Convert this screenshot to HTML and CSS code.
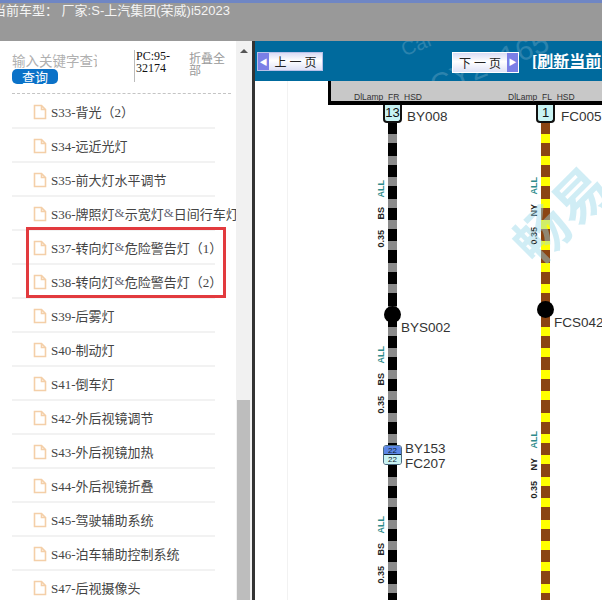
FILE: index.html
```html
<!DOCTYPE html>
<html lang="zh">
<head>
  <meta charset="UTF-8">
  <title>电路图</title>
  <link rel="stylesheet" href="styles.css">
</head>
<body>
  <div class="topbar">
    <div class="car-title">当前车型： 厂家:S-上汽集团(荣威)i52023</div>
  </div>
  <div class="main">
    <div class="sidebar">
      <div class="search">
        <div class="search-box">
          <div class="keyword">输入关键字查询</div>
          <button class="btn-query">查询</button>
        </div>
        <div class="pc-code">PC:95-32174</div>
        <div class="fold">折叠全部</div>
      </div>
      <ul class="tree">
        <li><svg class="file" viewBox="0 0 14 16"><path d="M1.5 1.5h7l4 4v9h-11z M8.5 1.5v4h4"/></svg>S33-背光（2）</li>
        <li><svg class="file" viewBox="0 0 14 16"><path d="M1.5 1.5h7l4 4v9h-11z M8.5 1.5v4h4"/></svg>S34-远近光灯</li>
        <li><svg class="file" viewBox="0 0 14 16"><path d="M1.5 1.5h7l4 4v9h-11z M8.5 1.5v4h4"/></svg>S35-前大灯水平调节</li>
        <li><svg class="file" viewBox="0 0 14 16"><path d="M1.5 1.5h7l4 4v9h-11z M8.5 1.5v4h4"/></svg>S36-牌照灯<span class="amp">&amp;</span>示宽灯<span class="amp">&amp;</span>日间行车灯</li>
        <li><svg class="file" viewBox="0 0 14 16"><path d="M1.5 1.5h7l4 4v9h-11z M8.5 1.5v4h4"/></svg>S37-转向灯<span class="amp">&amp;</span>危险警告灯（1）</li>
        <li><svg class="file" viewBox="0 0 14 16"><path d="M1.5 1.5h7l4 4v9h-11z M8.5 1.5v4h4"/></svg>S38-转向灯<span class="amp">&amp;</span>危险警告灯（2）</li>
        <li><svg class="file" viewBox="0 0 14 16"><path d="M1.5 1.5h7l4 4v9h-11z M8.5 1.5v4h4"/></svg>S39-后雾灯</li>
        <li><svg class="file" viewBox="0 0 14 16"><path d="M1.5 1.5h7l4 4v9h-11z M8.5 1.5v4h4"/></svg>S40-制动灯</li>
        <li><svg class="file" viewBox="0 0 14 16"><path d="M1.5 1.5h7l4 4v9h-11z M8.5 1.5v4h4"/></svg>S41-倒车灯</li>
        <li><svg class="file" viewBox="0 0 14 16"><path d="M1.5 1.5h7l4 4v9h-11z M8.5 1.5v4h4"/></svg>S42-外后视镜调节</li>
        <li><svg class="file" viewBox="0 0 14 16"><path d="M1.5 1.5h7l4 4v9h-11z M8.5 1.5v4h4"/></svg>S43-外后视镜加热</li>
        <li><svg class="file" viewBox="0 0 14 16"><path d="M1.5 1.5h7l4 4v9h-11z M8.5 1.5v4h4"/></svg>S44-外后视镜折叠</li>
        <li><svg class="file" viewBox="0 0 14 16"><path d="M1.5 1.5h7l4 4v9h-11z M8.5 1.5v4h4"/></svg>S45-驾驶辅助系统</li>
        <li><svg class="file" viewBox="0 0 14 16"><path d="M1.5 1.5h7l4 4v9h-11z M8.5 1.5v4h4"/></svg>S46-泊车辅助控制系统</li>
        <li><svg class="file" viewBox="0 0 14 16"><path d="M1.5 1.5h7l4 4v9h-11z M8.5 1.5v4h4"/></svg>S47-后视摄像头</li>
      </ul>
      <div class="red-box"></div>
    </div>
    <div class="scrollbar">
      <div class="scroll-up"></div>
      <div class="scroll-thumb"></div>
    </div>
    <div class="content">
      <div class="toolbar">
        <span class="wm-toolbar wm-a">Car</span>
        <span class="wm-toolbar wm-b">CY20165</span>
        <div class="page-btn btn-prev"><span class="arrow">◀</span><span class="page-label">上 一 页</span></div>
        <div class="page-btn btn-next"><span class="page-label">下 一 页</span><span class="arrow">▶</span></div>
        <a class="refresh">[刷新当前</a>
      </div>
      <div class="diagram">
        <div class="fuse-box">
          <span class="pin-name pin-r">DlLamp&nbsp; FR&nbsp; HSD</span>
          <span class="pin-name pin-l">DlLamp&nbsp; FL&nbsp; HSD</span>
        </div>

        <div class="wire wire-bs"></div>
        <div class="wire wire-ny"></div>

        <div class="plug plug-r">13</div>
        <div class="code code-by008">BY008</div>
        <div class="plug plug-l">1</div>
        <div class="code code-fc005">FC005</div>

        <div class="wire-tag tag-b1"><span>0.35</span><span>BS</span><span class="tag-all">ALL</span></div>
        <div class="wire-tag tag-b2"><span>0.35</span><span>BS</span><span class="tag-all">ALL</span></div>
        <div class="wire-tag tag-b3"><span>0.35</span><span>BS</span><span class="tag-all">ALL</span></div>
        <div class="wire-tag tag-n1"><span>0.35</span><span>NY</span><span class="tag-all">ALL</span></div>
        <div class="wire-tag tag-n2"><span>0.35</span><span>NY</span><span class="tag-all">ALL</span></div>

        <div class="node node-bys"></div>
        <div class="code code-bys">BYS002</div>
        <div class="node node-fcs"></div>
        <div class="code code-fcs">FCS042</div>

        <div class="inline-plug">
          <div class="inline-top">22</div>
          <div class="inline-bottom">22</div>
        </div>
        <div class="code code-by153">BY153</div>
        <div class="code code-fc207">FC207</div>

        <div class="wm-logo">畅易</div>
      </div>
    </div>
  </div>
</body>
</html>
```

FILE: styles.css
```css
* {
  box-sizing: border-box;
}

html, body {
  height: 600px;
  margin: 0;
  overflow: hidden;
}

body {
  font-family: "Liberation Sans", "Noto Sans CJK SC", sans-serif;
  background-color: #fff;
}

.topbar {
  height: 41px;
  background-color: #999;
  border-top: 3px solid #6f86c4;
  overflow: hidden;
}

.car-title {
  margin: 0 0 0 -7px;
  font-size: 13px;
  line-height: 15px;
  color: #f4f4f4;
  white-space: nowrap;
}

.main {
  display: flex;
  height: 559px;
}

/* left tree */
.sidebar {
  position: relative;
  width: 236px;
  background-color: #fff;
  font-family: "Liberation Serif", "Noto Sans CJK SC", serif;
  overflow: hidden;
}

.search {
  display: flex;
  height: 53px;
  margin: 0 5px 0 12px;
  padding-top: 9px;
  border-bottom: 1px dashed #c4c4c4;
}

.search-box {
  width: 122px;
}

.keyword {
  width: 85px;
  height: 18px;
  margin-top: 1px;
  font-family: "Noto Sans CJK SC", sans-serif;
  font-size: 13.5px;
  line-height: 18px;
  color: #b0b0b0;
  white-space: nowrap;
  overflow: hidden;
}

.btn-query {
  display: block;
  width: 46px;
  height: 15px;
  padding: 0;
  border: none;
  border-radius: 5px;
  background-color: #0b72c8;
  color: #fff;
  font-family: "Noto Sans CJK SC", sans-serif;
  font-size: 13px;
  line-height: 15px;
}

.pc-code {
  width: 55px;
  height: 32px;
  padding-left: 1px;
  border-left: 1px solid #bbb;
  font-size: 12px;
  line-height: 12px;
  color: #111;
}

.fold {
  width: 42px;
  font-family: "Noto Sans CJK SC", sans-serif;
  font-size: 12px;
  line-height: 12px;
  color: #999;
  word-break: break-all;
  margin-top: 2px;
}

.tree {
  list-style: none;
  margin: 1px 0 0 12px;
  padding: 0;
  width: 203px;
}

.tree li {
  display: flex;
  align-items: center;
  height: 34px;
  padding-left: 21px;
  border-bottom: 2px solid #f2f2f2;
  font-size: 13px;
  color: #444;
  white-space: nowrap;
}

.amp {
  width: 12px;
  text-align: center;
  color: #667;
}

.file {
  flex: none;
  width: 14px;
  height: 16px;
  margin: 2px 4px 0 0;
  fill: none;
  stroke: #f4cfa8;
  stroke-width: 1.6;
}

.red-box {
  position: absolute;
  left: 26px;
  top: 186px;
  width: 200px;
  height: 71px;
  border: 3px solid #e23a3e;
}

.scrollbar {
  position: relative;
  width: 16px;
  background-color: #f1f1f1;
}

.scroll-up {
  position: absolute;
  left: 4px;
  top: 8px;
  border-left: 4px solid transparent;
  border-right: 4px solid transparent;
  border-bottom: 4px solid #555;
}

.scroll-thumb {
  position: absolute;
  left: 1px;
  top: 359px;
  width: 13px;
  height: 200px;
  background-color: #bdbdbd;
}

/* right panel */
.content {
  flex: 1;
  border-left: 3px solid #333;
  min-width: 0;
}

.toolbar {
  position: relative;
  height: 40px;
  background-color: #006a9d;
  overflow: hidden;
}

.wm-toolbar {
  position: absolute;
  color: #2c83ad;
  transform: rotate(-22deg);
  white-space: nowrap;
}

.wm-a {
  left: 146px;
  top: -8px;
  font-size: 20px;
}

.wm-b {
  left: 172px;
  top: 6px;
  font-size: 30px;
}

.page-btn {
  position: absolute;
  top: 11px;
  display: flex;
  align-items: center;
  height: 19px;
  font-family: "Liberation Serif", "Noto Sans CJK SC", serif;
  background: linear-gradient(#d9dcf5, #fff 45%, #dfe2f6);
  border: 1px solid #b9c0e8;
  font-size: 12px;
  color: #222;
}

.btn-prev {
  left: 2px;
  width: 66px;
}

.btn-next {
  left: 197px;
  width: 67px;
  top: 11px;
  height: 21px;
  border-color: #fff;
}

.page-label {
  flex: 1;
  text-align: center;
}

.arrow {
  flex: none;
  width: 11px;
  height: 100%;
  background-color: #7b7fe6;
  color: #fff;
  font-size: 8px;
  line-height: 19px;
  text-align: center;
}

.refresh {
  position: absolute;
  left: 277px;
  top: 11px;
  font-family: "Liberation Serif", "Noto Sans CJK SC", serif;
  font-size: 16px;
  line-height: 20px;
  font-weight: bold;
  color: #fff;
  text-decoration: underline;
  white-space: nowrap;
}

/* wiring diagram */
.diagram {
  position: relative;
  height: 519px;
  overflow: hidden;
  background: linear-gradient(90deg, #fff 32px, #f2f2f2 32px, #f2f2f2 33px, #fff 33px);
}

.fuse-box {
  position: absolute;
  left: 73px;
  top: 0;
  width: 300px;
  height: 24px;
  background-color: #c8c8c8;
  border-left: 3px solid #000;
  border-bottom: 4px solid #000;
}

.pin-name {
  position: absolute;
  top: 11px;
  font-size: 8.5px;
  line-height: 10px;
  color: #333;
  white-space: nowrap;
}

.pin-r {
  left: 23px;
}

.pin-l {
  left: 177px;
}

.wire {
  position: absolute;
  top: 41px;
  width: 9px;
  height: 478px;
}

.wire-bs {
  left: 133px;
  background: repeating-linear-gradient(#000 0, #000 12.4px, #8a8a8a 12.4px, #8a8a8a 21.4px);
}

.wire-ny {
  left: 286px;
  background: repeating-linear-gradient(#8b4513 0, #8b4513 12.4px, #ffff00 12.4px, #ffff00 21.4px);
}

.plug {
  position: absolute;
  top: 24px;
  width: 19px;
  height: 18px;
  border: 2px solid #111;
  border-top: none;
  border-radius: 0 0 4px 4px;
  background-color: #c9f3f3;
  font-size: 13px;
  line-height: 15px;
  text-align: center;
  color: #111;
}

.plug-r {
  left: 128px;
}

.plug-l {
  left: 281px;
}

.code {
  position: absolute;
  font-size: 13.5px;
  line-height: 15px;
  color: #333;
  white-space: nowrap;
}

.code-by008 {
  left: 152px;
  top: 28px;
}

.code-fc005 {
  left: 306px;
  top: 28px;
}

.code-bys {
  left: 146px;
  top: 239px;
}

.code-fcs {
  left: 299px;
  top: 234px;
}

.code-by153 {
  left: 150px;
  top: 360px;
}

.code-fc207 {
  left: 150px;
  top: 375px;
}

.node {
  position: absolute;
  width: 17px;
  height: 17px;
  border-radius: 50%;
  background-color: #000;
}

.node-bys {
  left: 129px;
  top: 225px;
}

.node-fcs {
  left: 282px;
  top: 220px;
}

.inline-plug {
  position: absolute;
  left: 128px;
  top: 364px;
  width: 19px;
  height: 20px;
  border: 1px solid #4a6a80;
  border-radius: 3px;
  font-size: 8px;
  line-height: 9px;
  text-align: center;
  color: #123;
  overflow: hidden;
}

.inline-top {
  height: 9px;
  background-color: #5b86e6;
  border-bottom: 1px solid #123;
}

.inline-bottom {
  height: 9px;
  background-color: #c9f3f3;
}

.wire-tag {
  position: absolute;
  display: flex;
  gap: 10px;
  writing-mode: vertical-rl;
  transform: rotate(180deg);
  font-size: 9px;
  line-height: 9px;
  font-weight: bold;
  color: #222;
  white-space: nowrap;
}

.tag-all {
  color: #2e8b8b;
  font-size: 9px;
}

.tag-b1 {
  left: 122px;
  top: 99px;
}

.tag-b2 {
  left: 122px;
  top: 265px;
}

.tag-b3 {
  left: 122px;
  top: 435px;
}

.tag-n1 {
  left: 275px;
  top: 96px;
}

.tag-n2 {
  left: 275px;
  top: 350px;
}

.wm-logo {
  position: absolute;
  left: 250px;
  top: 102px;
  font-family: "Noto Sans CJK SC", sans-serif;
  font-size: 54px;
  line-height: 60px;
  font-weight: bold;
  color: rgba(150, 215, 232, 0.45);
  transform: rotate(-45deg);
  white-space: nowrap;
}
```
